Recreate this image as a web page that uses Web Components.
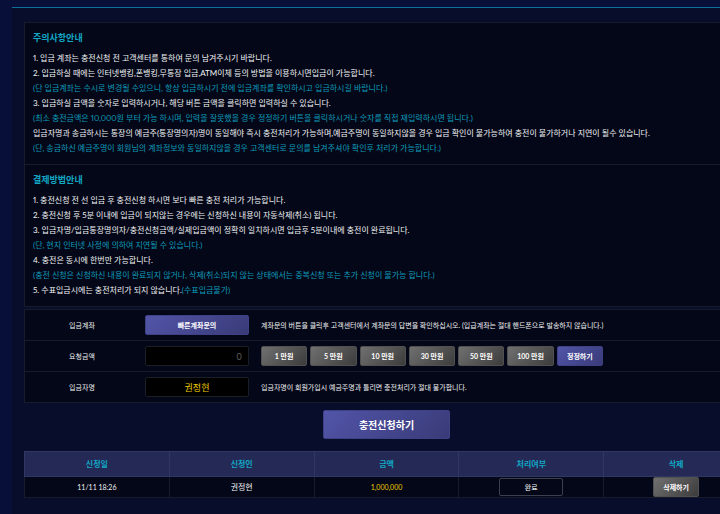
<!DOCTYPE html>
<html lang="ko">
<head>
<meta charset="utf-8">
<title>충전신청</title>
<style>
html {
    background-color: #08103a;
}
body {
    margin: 0;
    overflow: hidden;
    font-family: Lato, "Noto Sans CJK KR", sans-serif;
    font-size: 8px;
    line-height: 15px;
    color: #f2f2f4;
    --accent: #12a8c6;
    --note: #0e9cba;
    --line: #171b2c;
    --panel: #030717;
    --gold: #f0cc00;
}
</style>
</head>
<body>
<charge-page>
    <notice-panel>
        <notice-section data-title="주의사항안내">
            <p>1. 입금 계좌는 충전신청 전 고객센터를 통하여 문의 남겨주시기 바랍니다.</p>
            <p>2. 입금하실 때에는 인터넷뱅킹,폰뱅킹,무통장 입금,ATM이체 등의 방법을 이용하시면입금이 가능합니다.</p>
            <p class="note">(단 입금계좌는 수시로 변경될 수있으니, 항상 입금하시기 전에 입금계좌를 확인하시고 입금하시길 바랍니다.)</p>
            <p>3. 입금하실 금액을 숫자로 입력하시거나, 해당 버튼 금액을 클릭하면 입력하실 수 있습니다.</p>
            <p class="note">(최소 충전금액은 10,000원 부터 가능 하시며, 입력을 잘못했을 경우 정정하기 버튼을 클릭하시거나 숫자를 직접 재입력하시면 됩니다.)</p>
            <p>입금자명과 송금하시는 통장의 예금주(통장명의자)명이 동일해야 즉시 충전처리가 가능하며,예금주명이 동일하지않을 경우 입금 확인이 불가능하여 충전이 불가하거나 지연이 될수 있습니다.</p>
            <p class="note">(단, 송금하신 예금주명이 회원님의 계좌정보와 동일하지않을 경우 고객센터로 문의를 남겨주셔야 확인후 처리가 가능합니다.)</p>
        </notice-section>
        <notice-section data-title="결제방법안내">
            <p>1. 충전신청 전 선 입금 후 충전신청 하시면 보다 빠른 충전 처리가 가능합니다.</p>
            <p>2. 충전신청 후 5분 이내에 입금이 되지않는 경우에는 신청하신 내용이 자동삭제(취소) 됩니다.</p>
            <p>3. 입금자명/입금통장명의자/충전신청금액/실제입금액이 정확히 일치하시면 입금후 5분이내에 충전이 완료됩니다.</p>
            <p class="note">(단, 현지 인터넷 사정에 의하여 지연될 수 있습니다.)</p>
            <p>4. 충전은 동시에 한번만 가능합니다.</p>
            <p class="note">(충전 신청은 신청하신 내용이 완료되지 않거나, 삭제(취소)되지 않는 상태에서는 중복신청 또는 추가 신청이 불가능 합니다.)</p>
            <p>5. 수표입금시에는 충전처리가 되지 않습니다.<span class="note">(수표입금불가)</span></p>
        </notice-section>
    </notice-panel>
    <charge-form data-name="권정현"></charge-form>
    <charge-history></charge-history>
</charge-page>

<template id="page-template">
<style>
:host {
    display: block;
    padding: 7px 0 0 12px;
}
main {
    box-sizing: border-box;
    min-height: calc(100vh - 7px);
    border-top: 1px solid #0e709c;
    padding: 14px 0 16px 12px;
    background-color: #070d2a;
}
/* the content column is slightly wider than the window */
.column {
    margin-right: -29px;
}
</style>
<main><div class="column"><slot></slot></div></main>
</template>

<template id="panel-template">
<style>
:host {
    display: block;
    border: 1px solid var(--line);
    background-color: var(--panel);
    font-variant-numeric: proportional-nums;
}
</style>
<slot></slot>
</template>

<template id="section-template">
<style>
:host {
    display: block;
    padding: 7px 8px 8px;
    white-space: nowrap;
}
:host(:not(:last-child)) {
    border-bottom: 1px solid var(--line);
}
h2 {
    margin: 0 0 6px;
    font-size: 9px;
    font-weight: bold;
    line-height: 15px;
    color: var(--accent);
}
::slotted(p) {
    margin: 0;
}
::slotted(.note) {
    color: var(--note);
}
</style>
<h2></h2>
<slot></slot>
</template>

<template id="button-template">
<style>
:host {
    display: block;
}
button {
    display: block;
    box-sizing: border-box;
    width: 100%;
    height: 20px;
    margin: 0;
    padding: 0;
    border: 1px solid #3f4186;
    border-radius: 2px;
    background: linear-gradient(135deg, #5254a8, #393b78);
    color: #fff;
    font: bold 7px/16px Lato, "Noto Sans CJK KR", sans-serif;
    white-space: nowrap;
    cursor: pointer;
}
:host([data-kind="gray"]) button {
    border-color: #505050;
    background: linear-gradient(135deg, #707070, #3c3c3c);
}
:host([data-kind="outline"]) button {
    height: 18px;
    border-color: #3c3f4c;
    background: none;
    font-weight: normal;
}
:host([data-kind="large"]) button {
    height: 29px;
    font-size: 10px;
}
</style>
<button type="button"><slot></slot></button>
</template>

<template id="row-template">
<style>
:host {
    display: grid;
    grid-template-columns: 108px 104px 1fr;
    column-gap: 12px;
    align-items: center;
    height: 30px;
    border-bottom: 1px solid var(--line);
    font-size: 7px;
    white-space: nowrap;
}
.label {
    padding-left: 6px;
    text-align: center;
}
</style>
<div class="label"><slot name="label"></slot></div>
<div><slot name="control"></slot></div>
<div><slot></slot></div>
</template>

<template id="form-template">
<style>
:host {
    display: block;
    margin-top: 2px;
}
.rows {
    border: 1px solid var(--line);
    border-bottom: 0;
    background-color: var(--panel);
}
input {
    display: block;
    box-sizing: border-box;
    width: 100%;
    height: 20px;
    margin: 0;
    padding: 0 6px;
    border: 1px solid #1c1e26;
    border-radius: 2px;
    outline: 0;
    background-color: #000;
    font: 9px/18px Inter, "Noto Sans CJK KR", sans-serif;
}
#amount {
    color: #5c5c5c;
    text-align: right;
}
#depositor {
    color: var(--gold);
    text-align: center;
}
.amounts {
    display: flex;
    gap: 3px;
    width: 342px;
}
.amounts action-button {
    flex: 1;
}
.submit {
    width: 127px;
    margin: 7px auto 0;
}
</style>
<form>
    <div class="rows">
        <form-row>
            <span slot="label">입금계좌</span>
            <action-button slot="control">빠른계좌문의</action-button>
            계좌문의 버튼을 클릭후 고객센터에서 계좌문의 답변을 확인하십시오. (입급계좌는 절대 핸드폰으로 발송하지 않습니다.)
        </form-row>
        <form-row>
            <label slot="label" for="amount">요청금액</label>
            <input slot="control" id="amount" type="text" inputmode="numeric" value="0">
            <div class="amounts"></div>
        </form-row>
        <form-row>
            <label slot="label" for="depositor">입금자명</label>
            <input slot="control" id="depositor" type="text" readonly>
            입금자명이 회원가입시 예금주명과 틀리면 충전처리가 절대 불가합니다.
        </form-row>
    </div>
    <action-button class="submit" data-kind="large">충전신청하기</action-button>
</form>
</template>

<template id="history-template">
<style>
:host {
    display: block;
    margin-top: 12px;
}
table {
    width: 100%;
    table-layout: fixed;
    border-collapse: collapse;
    background-color: var(--panel);
    text-align: center;
}
th, td {
    padding: 0;
    border: 1px solid var(--line);
}
th {
    height: 24px;
    border-color: #303763;
    background-color: #242a55;
    color: var(--accent);
    font-weight: bold;
}
td {
    height: 20px;
}
.number {
    font-size: 7px;
}
.amount {
    color: var(--gold);
}
.status {
    width: 64px;
    margin: 0 auto;
}
.remove {
    width: 46px;
    margin: 0 auto;
}
</style>
<table>
    <thead>
        <tr><th>신청일</th><th>신청인</th><th>금액</th><th>처리여부</th><th>삭제</th></tr>
    </thead>
    <tbody></tbody>
</table>
</template>

<script>
// shared base: clones the element's template into its shadow root
class TemplateElement extends HTMLElement{
    constructor(){
        super();
        this.attachShadow({mode:"open"});
        const template = document.querySelector(this.constructor.template);
        this.shadowRoot.appendChild(template.content.cloneNode(true));
    }
}

class ChargePage extends TemplateElement{
    static template = "#page-template";
}

class NoticePanel extends TemplateElement{
    static template = "#panel-template";
}

class NoticeSection extends TemplateElement{
    static template = "#section-template";

    connectedCallback(){
        this.shadowRoot.querySelector("h2").textContent = this.dataset.title;
        // notes inside a paragraph are out of reach of ::slotted
        this.querySelectorAll("p .note").forEach(n => n.style.color = "var(--note)");
    }
}

class ActionButton extends TemplateElement{
    static template = "#button-template";
}

class FormRow extends TemplateElement{
    static template = "#row-template";
}

class ChargeForm extends TemplateElement{
    static template = "#form-template";

    connectedCallback(){
        const amount = this.shadowRoot.querySelector("#amount");
        this.shadowRoot.querySelector("#depositor").value = this.dataset.name;

        const box = this.shadowRoot.querySelector(".amounts");
        for (const n of [1, 5, 10, 30, 50, 100]){
            const button = document.createElement("action-button");
            button.dataset.kind = "gray";
            button.textContent = `${n} 만원`;
            button.onclick = () => {
                const total = Number(amount.value.replace(/,/g, "")) + n * 10000;
                amount.value = total.toLocaleString("en-US");
            };
            box.appendChild(button);
        }

        const reset = document.createElement("action-button");
        reset.textContent = "정정하기";
        reset.onclick = () => amount.value = "0";
        box.appendChild(reset);
    }
}

class ChargeHistory extends TemplateElement{
    static template = "#history-template";

    connectedCallback(){
        const rows = [{date:"11/11 18:26", name:"권정현", amount:"1,000,000", status:"완료"}];
        this.shadowRoot.querySelector("tbody").innerHTML = rows.map(r => `
            <tr>
                <td class="number">${r.date}</td>
                <td>${r.name}</td>
                <td class="number amount">${r.amount}</td>
                <td><action-button class="status" data-kind="outline">${r.status}</action-button></td>
                <td><action-button class="remove" data-kind="gray">삭제하기</action-button></td>
            </tr>`).join("");
    }
}

customElements.define("action-button", ActionButton);
customElements.define("form-row", FormRow);
customElements.define("notice-section", NoticeSection);
customElements.define("notice-panel", NoticePanel);
customElements.define("charge-form", ChargeForm);
customElements.define("charge-history", ChargeHistory);
customElements.define("charge-page", ChargePage);
</script>
</body>
</html>
